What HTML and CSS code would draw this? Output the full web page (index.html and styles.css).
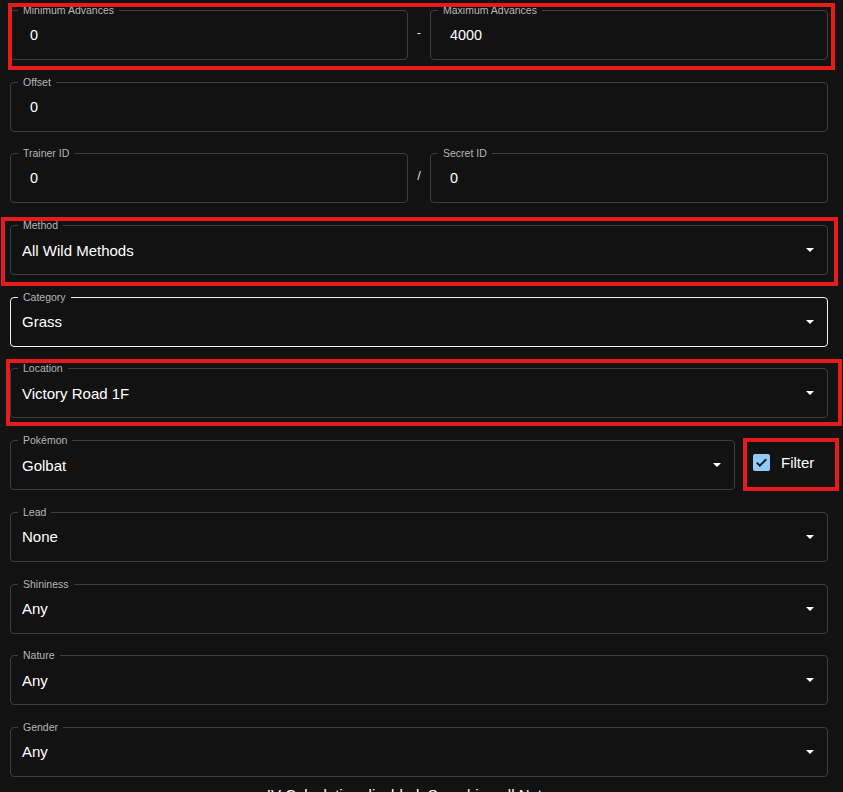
FILE: index.html
```html
<!DOCTYPE html>
<html>
<head>
<meta charset="utf-8">
<link rel="stylesheet" href="styles.css">
</head>
<body>
<div class="page">
  <div class="form">
    <div class="row pair">
      <div class="field"><span class="label">Minimum Advances</span><span class="value num">0</span></div>
      <span class="sep">-</span>
      <div class="field"><span class="label">Maximum Advances</span><span class="value num">4000</span></div>
    </div>
    <div class="row">
      <div class="field"><span class="label">Offset</span><span class="value num">0</span></div>
    </div>
    <div class="row pair">
      <div class="field"><span class="label">Trainer ID</span><span class="value num">0</span></div>
      <span class="sep">/</span>
      <div class="field"><span class="label">Secret ID</span><span class="value num">0</span></div>
    </div>
    <div class="row">
      <div class="field select"><span class="label">Method</span><span class="value">All Wild Methods</span><span class="arrow"></span></div>
    </div>
    <div class="row">
      <div class="field select focused"><span class="label">Category</span><span class="value">Grass</span><span class="arrow"></span></div>
    </div>
    <div class="row">
      <div class="field select"><span class="label">Location</span><span class="value">Victory Road 1F</span><span class="arrow"></span></div>
    </div>
    <div class="row pokemon">
      <div class="field select"><span class="label">Pokémon</span><span class="value">Golbat</span><span class="arrow"></span></div>
      <label class="filter">
        <span class="checkbox"><svg viewBox="0 0 18 18" width="17" height="17"><path d="M4 9.2l3.2 3.2L14 5.6" fill="none" stroke="#121212" stroke-width="2"/></svg></span>
        <span class="filter-text">Filter</span>
      </label>
    </div>
    <div class="row">
      <div class="field select"><span class="label">Lead</span><span class="value">None</span><span class="arrow"></span></div>
    </div>
    <div class="row">
      <div class="field select"><span class="label">Shininess</span><span class="value">Any</span><span class="arrow"></span></div>
    </div>
    <div class="row">
      <div class="field select"><span class="label">Nature</span><span class="value">Any</span><span class="arrow"></span></div>
    </div>
    <div class="row">
      <div class="field select"><span class="label">Gender</span><span class="value">Any</span><span class="arrow"></span></div>
    </div>
    <p class="note">IV Calculation disabled: Searching all Natures</p>
  </div>
  <div class="mark mark-adv"></div>
  <div class="mark mark-method"></div>
  <div class="mark mark-location"></div>
  <div class="mark mark-filter"></div>
</div>
</body>
</html>
```

FILE: styles.css
```css
html, body {
  margin: 0;
  padding: 0;
  background: #121212;
}
body {
  font-family: "Liberation Sans", Arial, sans-serif;
  color: #fff;
}
.page {
  position: relative;
  width: 843px;
  height: 792px;
  overflow: hidden;
}
.form {
  width: 818px;
  margin-left: 10px;
  padding-top: 10px;
  display: flex;
  flex-direction: column;
  gap: 21.7px;
}
.row {
  display: flex;
  align-items: center;
}
.field {
  position: relative;
  flex: 1;
  height: 50px;
  box-sizing: border-box;
  border: 1px solid #3e3e3e;
  border-radius: 4px;
  display: flex;
  align-items: center;
}
.field.focused {
  border-color: #f2f2f2;
}
.label {
  position: absolute;
  top: -7px;
  left: 7px;
  padding: 0 5px;
  background: #121212;
  font-size: 10.5px;
  line-height: 12px;
  color: #b4b6b8;
}
.value {
  font-size: 15px;
  padding-left: 11px;
  color: #fff;
}
.value.num {
  font-size: 14.4px;
  padding-left: 19px;
}
.arrow {
  margin-left: auto;
  margin-right: 13px;
  width: 0;
  height: 0;
  border-left: 4.5px solid transparent;
  border-right: 4.5px solid transparent;
  border-top: 4.5px solid #fff;
}
.sep {
  width: 22px;
  text-align: center;
  font-size: 13px;
  color: #ddd;
  margin-top: -6px;
}
.pokemon .field {
  flex: 0 0 725px;
}
.filter {
  display: flex;
  align-items: center;
  margin-left: 18px;
  margin-top: -5px;
}
.checkbox {
  width: 17px;
  height: 17px;
  border-radius: 2px;
  background: #90caf9;
  display: flex;
  align-items: center;
  justify-content: center;
}
.checkbox svg {
  display: block;
}
.filter-text {
  margin-left: 11px;
  font-size: 15px;
}
.note {
  margin: -15px 0 0 0;
  text-align: center;
  font-size: 15px;
  line-height: 22px;
  padding-left: 0;
}
.mark {
  position: absolute;
  border: 4px solid #e41c1c;
  box-sizing: border-box;
  pointer-events: none;
}
.mark-adv {
  left: 8px;
  top: 3px;
  width: 827px;
  height: 67px;
}
.mark-method {
  left: 1px;
  top: 217px;
  width: 837px;
  height: 69px;
}
.mark-location {
  left: 6px;
  top: 359px;
  width: 836px;
  height: 67px;
}
.mark-filter {
  left: 743px;
  top: 438px;
  width: 96px;
  height: 53px;
}
```
